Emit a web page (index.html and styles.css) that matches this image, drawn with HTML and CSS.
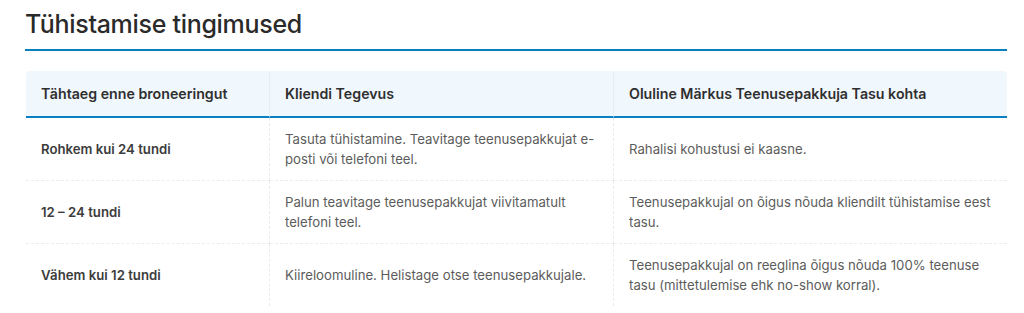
FILE: index.html
```html
<!DOCTYPE html>
<html lang="et">
<head>
<meta charset="utf-8">
<title>Tühistamise tingimused</title>
<link rel="stylesheet" href="styles.css">
</head>
<body>
<section class="policy">
  <h1 class="policy-title">Tühistamise tingimused</h1>
  <table class="policy-table">
    <colgroup>
      <col class="c1"><col class="c2"><col class="c3">
    </colgroup>
    <thead>
      <tr>
        <th>Tähtaeg enne broneeringut</th>
        <th>Kliendi Tegevus</th>
        <th>Oluline Märkus Teenusepakkuja Tasu kohta</th>
      </tr>
    </thead>
    <tbody>
      <tr>
        <td class="term">Rohkem kui 24 tundi</td>
        <td>Tasuta tühistamine. Teavitage teenusepakkujat e-posti või telefoni teel.</td>
        <td>Rahalisi kohustusi ei kaasne.</td>
      </tr>
      <tr>
        <td class="term">12 – 24 tundi</td>
        <td>Palun teavitage teenusepakkujat viivitamatult telefoni teel.</td>
        <td>Teenusepakkujal on õigus nõuda kliendilt tühistamise eest tasu.</td>
      </tr>
      <tr>
        <td class="term">Vähem kui 12 tundi</td>
        <td>Kiireloomuline. Helistage otse teenusepakkujale.</td>
        <td>Teenusepakkujal on reeglina õigus nõuda 100% teenuse tasu (mittetulemise ehk no-show korral).</td>
      </tr>
    </tbody>
  </table>
</section>
</body>
</html>
```
FILE: styles.css
```css
html, body {
  margin: 0;
  padding: 0;
  background: #ffffff;
}
body {
  font-family: Inter, "Liberation Sans", sans-serif;
  color: #555;
}
.policy {
  padding: 9px 17px 0 25px;
}
.policy-title {
  margin: 0;
  font-size: 25px;
  line-height: 30px;
  font-weight: 500;
  color: #2a2a2a;
  padding-bottom: 10px;
  border-bottom: 2px solid #0a7fc1;
  letter-spacing: -0.3px;
}
.policy-table {
  margin-top: 20px;
  margin-left: 1px;
  width: 981px;
  border-collapse: separate;
  border-spacing: 0;
  table-layout: fixed;
  font-size: 13.2px;
  line-height: 20px;
}
.c1 { width: 244px; }
.c2 { width: 344px; }
.c3 { width: 393px; }
.policy-table th {
  background: #f0f7fd;
  color: #2f2f2f;
  font-size: 14.2px;
  line-height: 22px;
  font-weight: 600;
  text-align: left;
  padding: 12px 15px 11px;
  border-bottom: 2px solid #0a7fc1;
  border-right: 1px solid #e6edf3;
}
.policy-table th:first-child { border-top-left-radius: 4px; }
.policy-table th:last-child { border-right: none; border-top-right-radius: 4px; }
.policy-table td {
  padding: 11px 15px;
  vertical-align: middle;
  color: #5c5c5c;
  border-bottom: 1px dashed #ececec;
  border-right: 1px dashed #ececec;
}
.policy-table td:last-child { border-right: none; }
.policy-table tr:last-child td { border-bottom: none; }
.policy-table td.term {
  color: #3c3c3c;
  font-weight: 600;
}
```
